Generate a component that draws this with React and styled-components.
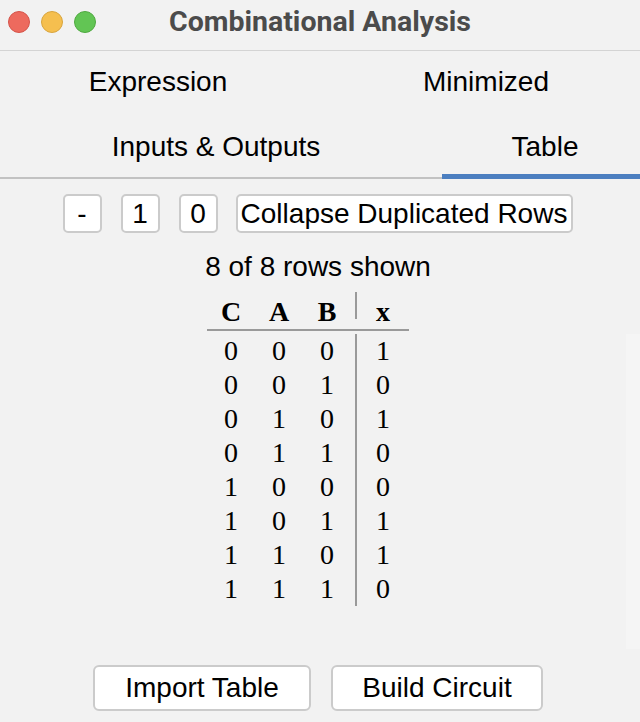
import React from 'react'
import styled, { createGlobalStyle } from 'styled-components'

const rows = [
  [0, 0, 0, 1],
  [0, 0, 1, 0],
  [0, 1, 0, 1],
  [0, 1, 1, 0],
  [1, 0, 0, 0],
  [1, 0, 1, 1],
  [1, 1, 0, 1],
  [1, 1, 1, 0],
]

function App() {
  return (
    <Window>
      <GlobalStyle />
      <TitleBar>
        <Lights>
          <Light color="#ed6a5e" edge="#d5544a" />
          <Light color="#f5bf4f" edge="#d9a53d" />
          <Light color="#62c554" edge="#4fa940" />
        </Lights>
        <Title>Combinational Analysis</Title>
      </TitleBar>

      <TabRow height={62}>
        <Tab width={316}>Expression</Tab>
        <Tab width={324} shift={16}>Minimized</Tab>
      </TabRow>
      <TabRow height={66}>
        <Tab width={442} shift={-10} underline>Inputs &amp; Outputs</Tab>
        <Tab width={198} shift={8} underline active>Table</Tab>
      </TabRow>

      <Toolbar>
        <SmallButton>-</SmallButton>
        <SmallButton>1</SmallButton>
        <SmallButton>0</SmallButton>
        <WideButton>Collapse Duplicated Rows</WideButton>
      </Toolbar>

      <Status>8 of 8 rows shown</Status>

      <HeadRow>
        <HeadCell>C</HeadCell>
        <HeadCell>A</HeadCell>
        <HeadCell>B</HeadCell>
        <HeadCell out>x</HeadCell>
      </HeadRow>

      <Pane>
        <Body>
          {rows.map((r, i) => (
            <Row key={i}>
              <Cell>{r[0]}</Cell>
              <Cell>{r[1]}</Cell>
              <Cell>{r[2]}</Cell>
              <Cell out>{r[3]}</Cell>
            </Row>
          ))}
        </Body>
        <Track />
      </Pane>

      <Footer>
        <BigButton width={218}>Import Table</BigButton>
        <BigButton width={212}>Build Circuit</BigButton>
      </Footer>
    </Window>
  )
}

export default App

const GlobalStyle = createGlobalStyle`
    html, body {
        margin: 0;
        padding: 0;
        background: #f2f2f2;
    }
`

const Window = styled.div`
    width: 640px;
    height: 722px;
    display: flex;
    flex-direction: column;
    background: #f2f2f2;
    font-family: "Liberation Sans", Arial, sans-serif;
    color: #000;
    overflow: hidden;
`

const TitleBar = styled.div`
    height: 51px;
    box-sizing: border-box;
    padding-bottom: 7px;
    display: flex;
    align-items: center;
    border-bottom: 1px solid #d4d4d4;
    flex-shrink: 0;
`

const Lights = styled.div`
    width: 104px;
    padding-left: 8px;
    display: flex;
    gap: 11px;
`

const Light = styled.span`
    width: 22px;
    height: 22px;
    box-sizing: border-box;
    border-radius: 50%;
    background: ${p => p.color};
    border: 1px solid ${p => p.edge};
`

const Title = styled.div`
    flex: 1;
    text-align: center;
    padding-right: 112px;
    font-family: Roboto, "Noto Sans", sans-serif;
    font-weight: 700;
    font-size: 28.5px;
    color: #4b4b4b;
`

const TabRow = styled.div`
    height: ${p => p.height}px;
    display: flex;
    flex-shrink: 0;
`

const Tab = styled.div`
    width: ${p => p.width}px;
    box-sizing: border-box;
    display: flex;
    align-items: center;
    justify-content: center;
    padding-left: ${p => Math.max(p.shift || 0, 0)}px;
    padding-right: ${p => Math.max(-(p.shift || 0), 0)}px;
    padding-top: ${p => (p.underline ? (p.active ? 7 : 4) : 0)}px;
    font-size: 28px;
    border-bottom: ${p =>
      p.underline ? (p.active ? '5px solid #4c7fc0' : '2px solid #c2c2c2') : 'none'};
`

const Toolbar = styled.div`
    margin-top: 15px;
    display: flex;
    justify-content: center;
    gap: 19px;
    padding-right: 5px;
`

const SmallButton = styled.button`
    width: 39px;
    height: 39px;
    padding: 0;
    box-sizing: border-box;
    background: #fff;
    border: 2px solid #cbcbcb;
    border-radius: 5px;
    font-family: "Liberation Sans", Arial, sans-serif;
    font-size: 28px;
    color: #000;
`

const WideButton = styled(SmallButton)`
    width: 337px;
    margin-left: -1px;
`

const Status = styled.div`
    margin-top: 17px;
    line-height: 34px;
    text-align: center;
    padding-right: 4px;
    font-size: 28px;
`

const HeadRow = styled.div`
    margin-top: 8px;
    margin-left: 207px;
    width: 202px;
    display: flex;
    padding-bottom: 10px;
    border-bottom: 2px solid #9a9a9a;
`

const HeadCell = styled.div`
    width: ${p => (p.out ? 52 : 48)}px;
    margin-left: ${p => (p.out ? 4 : 0)}px;
    height: 27px;
    line-height: 40px;
    text-align: center;
    border-left: ${p => (p.out ? '2px solid #9a9a9a' : 'none')};
    font-family: "Liberation Serif", "Times New Roman", serif;
    font-weight: 700;
    font-size: 28px;
`

const Pane = styled.div`
    margin-top: 3px;
    height: 315px;
    display: flex;
    flex-shrink: 0;
`

const Body = styled.div`
    flex: 1;
    padding-left: 207px;
`

const Row = styled.div`
    display: flex;
    height: 34px;
`

const Cell = styled.div`
    width: ${p => (p.out ? 52 : 48)}px;
    margin-left: ${p => (p.out ? 4 : 0)}px;
    line-height: 34px;
    text-align: center;
    border-left: ${p => (p.out ? '2px solid #9a9a9a' : 'none')};
    font-family: "Liberation Serif", "Times New Roman", serif;
    font-size: 28px;
`

const Track = styled.div`
    width: 14px;
    background: #f5f5f5;
`

const Footer = styled.div`
    margin-top: 16px;
    display: flex;
    justify-content: center;
    gap: 20px;
    padding-right: 4px;
`

const BigButton = styled.button`
    width: ${p => p.width}px;
    height: 46px;
    box-sizing: border-box;
    background: #fff;
    border: 2px solid #cbcbcb;
    border-radius: 6px;
    font-family: "Liberation Sans", Arial, sans-serif;
    font-size: 28px;
    color: #000;
`
